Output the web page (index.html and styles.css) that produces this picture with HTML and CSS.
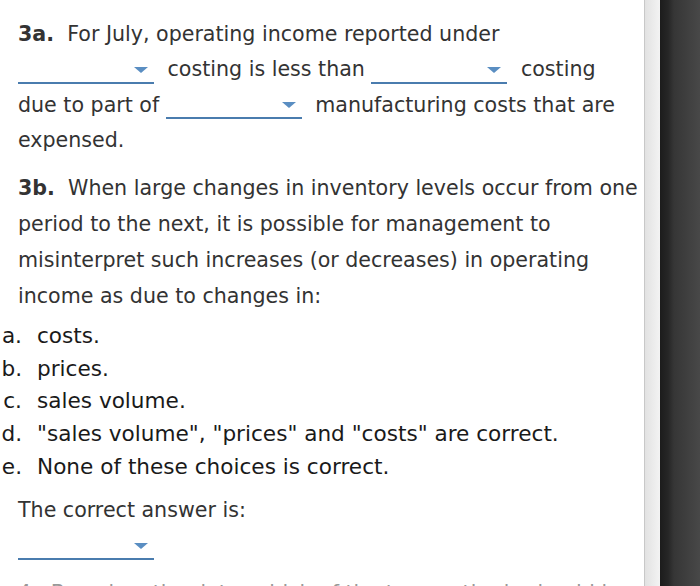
FILE: index.html
```html
<!DOCTYPE html>
<html lang="en">
<head>
<meta charset="utf-8">
<title>Question 3</title>
<link rel="stylesheet" href="styles.css">
</head>
<body>
<div class="frame">
  <main class="content">
    <p class="q q-a"><b class="num">3a.</b> For July, operating income reported under<br><span class="dd"><span class="caret"></span></span> costing is less than <span class="dd"><span class="caret"></span></span> costing<br>due to part of <span class="dd"><span class="caret"></span></span> manufacturing costs that are<br>expensed.</p>
    <p class="q q-b"><b class="num">3b.</b> When large changes in inventory levels occur from one period to the next, it is possible for management to misinterpret such increases (or decreases) in operating income as due to changes in:</p>
    <ol class="choices">
      <li><span class="lbl">a.</span><span>costs.</span></li>
      <li><span class="lbl">b.</span><span>prices.</span></li>
      <li><span class="lbl">c.</span><span>sales volume.</span></li>
      <li><span class="lbl">d.</span><span>"sales volume", "prices" and "costs" are correct.</span></li>
      <li><span class="lbl">e.</span><span>None of these choices is correct.</span></li>
    </ol>
    <p class="q q-ans">The correct answer is:</p>
    <div class="q ans-line"><span class="dd"><span class="caret"></span></span></div>
    <p class="q q-next">4.&nbsp; Based on the data, which of the two methods should be used for it? Explain.</p>
  </main>
  <div class="gutter"></div>
  <div class="dark"></div>
</div>
</body>
</html>
```

FILE: styles.css
```css
html, body {
  margin: 0;
  padding: 0;
  height: 586px;
  overflow: hidden;
}

body {
  font-family: "DejaVu Sans", Verdana, sans-serif;
  font-size: 20.6px;
  color: #333;
  background: #fff;
}

.frame {
  display: flex;
  height: 586px;
}

.content {
  flex: 1;
  min-width: 0;
  padding-top: 16.5px;
  background: #fff;
}

.q {
  margin: 0 0 12.7px;
  padding-left: 18px;
  padding-right: 2px;
  line-height: 35.6px;
}

.q-a {
  margin-bottom: 11.5px;
}

.q-b {
  margin-bottom: 5.5px;
  line-height: 36px;
}

.num {
  font-weight: bold;
  margin-right: 0.32em;
}

.dd {
  display: inline-block;
  width: 136px;
  height: 22px;
  box-sizing: border-box;
  margin-right: 7px;
  padding: 5px 6px 0 0;
  border-bottom: 2px solid #4a7cae;
  vertical-align: -7.5px;
}

.caret {
  display: block;
  width: 0;
  height: 0;
  margin-left: auto;
  border-left: 7px solid transparent;
  border-right: 7px solid transparent;
  border-top: 6px solid #5a8ec2;
}

.choices {
  list-style: none;
  margin: 0 0 9px;
  padding: 0;
  font-size: 21.6px;
  line-height: 32.8px;
  color: #1a1a1a;
}

.choices li {
  display: grid;
  grid-template-columns: 22px 1fr;
  column-gap: 15px;
}

.lbl {
  text-align: right;
}

.q-ans {
  margin-bottom: 0;
}

.ans-line {
  margin-bottom: 12px;
}

.q-next {
  color: #999;
}

.gutter {
  width: 15px;
  border-left: 1px solid #c8c8c8;
  background: linear-gradient(to right, #e2e2e2, #f3f3f3);
}

.dark {
  width: 40px;
  background: linear-gradient(to right, #1c1c1c 0, #262626 8px, #363636 14px, #484848 100%);
}
```
